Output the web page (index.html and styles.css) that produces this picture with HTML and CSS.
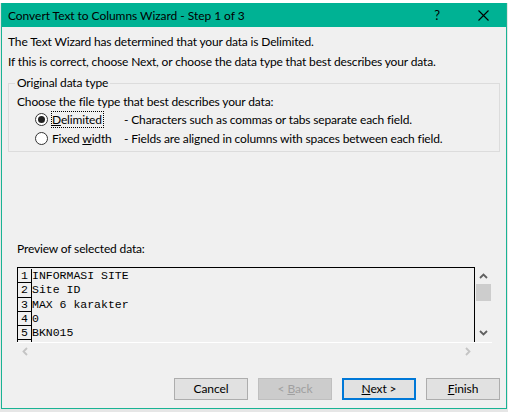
FILE: index.html
```html
<!DOCTYPE html>
<html>
<head>
<meta charset="utf-8">
<link rel="stylesheet" href="styles.css">
</head>
<body>
<div class="backdrop"></div>
<div class="dialog">
  <div class="titlebar">
    <span class="title">Convert Text to Columns Wizard - Step 1 of 3</span>
    <span class="help">?</span>
    <span class="close">
      <svg width="11" height="11" viewBox="0 0 11 11"><path d="M0.5 0.5 L10.5 10.5 M10.5 0.5 L0.5 10.5" stroke="#000" stroke-width="1.1" fill="none"/></svg>
    </span>
  </div>
  <div class="content">
    <p class="line">The Text Wizard has determined that your data is Delimited.</p>
    <p class="line">If this is correct, choose Next, or choose the data type that best describes your data.</p>
    <div class="group">
      <span class="legend">Original data type</span>
      <p class="choose">Choose the file type that best describes your data:</p>
      <div class="opt">
        <span class="radio"><span class="dot"></span></span>
        <span class="optlabel"><span class="focus"><u>D</u>elimited</span></span>
        <span class="desc">- Characters such as commas or tabs separate each field.</span>
      </div>
      <div class="opt">
        <span class="radio"></span>
        <span class="optlabel">Fixed <u>w</u>idth</span>
        <span class="desc">- Fields are aligned in columns with spaces between each field.</span>
      </div>
    </div>
    <p class="preview-label">Preview of selected data:</p>
    <div class="preview">
      <div class="preview-main">
        <div class="rows">
          <div class="row"><span class="num">1</span><span class="val">INFORMASI SITE</span></div>
          <div class="row"><span class="num">2</span><span class="val">Site ID</span></div>
          <div class="row"><span class="num">3</span><span class="val">MAX 6 karakter</span></div>
          <div class="row"><span class="num">4</span><span class="val">0</span></div>
          <div class="row"><span class="num">5</span><span class="val">BKN015</span></div>
          <div class="row"><span class="num"></span><span class="val"></span></div>
        </div>
        <div class="vscroll">
          <svg class="arrow" width="9" height="6" viewBox="0 0 9 6"><path d="M1 5 L4.5 1.5 L8 5" stroke="#606060" stroke-width="1.8" fill="none"/></svg>
          <div class="thumb"></div>
          <div class="spacer"></div>
          <svg class="arrow" width="9" height="6" viewBox="0 0 9 6"><path d="M1 1 L4.5 4.5 L8 1" stroke="#606060" stroke-width="1.8" fill="none"/></svg>
        </div>
      </div>
      <div class="hscroll">
        <svg width="6" height="9" viewBox="0 0 6 9"><path d="M5 1 L1.5 4.5 L5 8" stroke="#c4c4c4" stroke-width="1.8" fill="none"/></svg>
        <svg width="6" height="9" viewBox="0 0 6 9"><path d="M1 1 L4.5 4.5 L1 8" stroke="#c4c4c4" stroke-width="1.8" fill="none"/></svg>
      </div>
    </div>
    <div class="buttons">
      <button class="btn">Cancel</button>
      <button class="btn disabled">&lt; <u>B</u>ack</button>
      <button class="btn default"><u>N</u>ext &gt;</button>
      <button class="btn"><u>F</u>inish</button>
    </div>
  </div>
</div>
</body>
</html>
```

FILE: styles.css
```css
* { box-sizing: border-box; }
html, body { margin: 0; padding: 0; }
body {
  width: 508px;
  height: 412px;
  background: #e6e6e6;
  font-family: "Lato", "Noto Sans", sans-serif;
  font-size: 12px;
  letter-spacing: -0.15px;
  color: #000;
  overflow: hidden;
}
.backdrop {
  height: 3px;
  background: #ffffff;
}
.dialog {
  margin-left: 1px;
  width: 506px;
  height: 406px;
  border: 1px solid #19b394;
  border-top: none;
  background: #f0f0f0;
  display: flex;
  flex-direction: column;
}
.titlebar {
  height: 24px;
  background: #00b294;
  display: flex;
  align-items: center;
  padding-left: 6px;
  flex: none;
}
.title {
  flex: 1;
  font-size: 12px;
  letter-spacing: -0.05px;
  color: #000;
}
.help {
  width: 12px;
  font-size: 13px;
  margin-right: 35px;
  text-align: center;
}
.close {
  width: 11px;
  height: 11px;
  margin-right: 17px;
  display: flex;
}
.content {
  flex: 1;
  padding: 5px 6px 0 6px;
  display: flex;
  flex-direction: column;
}
.line {
  margin: 0;
  height: 20px;
  line-height: 20px;
  white-space: nowrap;
}
.group {
  position: relative;
  margin-top: 11px;
  padding: 2px 0 3px 8px;
  border: 1px solid #dcdcdc;
  width: 492px;
  height: 69px;
}
.legend {
  position: absolute;
  left: 6px;
  top: -9px;
  padding: 0 2px;
  line-height: 16px;
  background: #f0f0f0;
}
.choose {
  margin: 8px 0 0 0;
  line-height: 16px;
}
.opt {
  display: flex;
  align-items: center;
  height: 19px;
  padding-left: 18px;
}
.radio {
  width: 13px;
  height: 13px;
  border: 1px solid #333;
  border-radius: 50%;
  background: #fff;
  display: flex;
  align-items: center;
  justify-content: center;
  margin-right: 4px;
  flex: none;
}
.radio .dot {
  width: 7px;
  height: 7px;
  border-radius: 50%;
  background: #222;
}
.optlabel {
  width: 72px;
  flex: none;
}
.focus {
  outline: 1px dotted #000;
  outline-offset: 0;
  padding: 0 1px 0 0;
}
.desc { white-space: nowrap; }
.preview-label {
  margin: 89px 0 0 9px;
  line-height: 16px;
}
.preview {
  margin: 10px 0 0 9px;
  width: 475px;
  display: flex;
  flex-direction: column;
}
.preview-main {
  display: flex;
  height: 76px;
  border-bottom: 1px solid #fff;
}
.rows {
  width: 458px;
  border: 1px solid #000;
  border-bottom: none;
  padding-top: 1px;
  overflow: hidden;
}
.row {
  display: flex;
  height: 14.3px;
  font-family: "Liberation Mono", "Courier New", monospace;
  font-size: 11.5px;
  letter-spacing: 0;
  line-height: 14px;
}
.num {
  width: 14px;
  flex: none;
  border-right: 1px solid #000;
  border-bottom: 1px solid #000;
  text-align: center;
}
.val { white-space: pre; }
.vscroll {
  width: 17px;
  display: flex;
  flex-direction: column;
  align-items: center;
  padding-top: 6px;
  padding-bottom: 6px;
}
.vscroll .arrow { flex: none; }
.thumb {
  margin-top: 5px;
  width: 15px;
  height: 17px;
  background: #cdcdcd;
}
.spacer { flex: 1; }
.hscroll {
  height: 17px;
  display: flex;
  justify-content: space-between;
  align-items: center;
  padding: 0 4px 0 5px;
  width: 458px;
}
.buttons {
  margin-top: 18px;
  display: flex;
  justify-content: flex-end;
  gap: 10px;
  padding-right: 0;
}
.btn {
  width: 74px;
  height: 22px;
  background: #e1e1e1;
  border: 1px solid #adadad;
  font-family: "Lato", "Noto Sans", sans-serif;
  font-size: 12px;
  letter-spacing: -0.1px;
  color: #000;
  padding: 0;
  line-height: 18px;
}
.btn.disabled {
  background: #cccccc;
  border-color: #bfbfbf;
  color: #a0a0a0;
}
.btn.default {
  border: 2px solid #0078d7;
}
```
